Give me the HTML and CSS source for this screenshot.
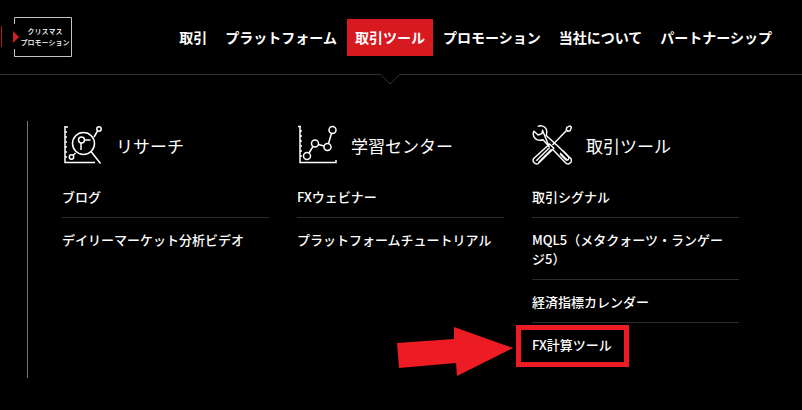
FILE: index.html
```
<!DOCTYPE html>
<html lang="ja">
<head>
  <title>取引ツール</title>
  <meta charset="UTF-8">
  <link rel="stylesheet" href="styles.css">
</head>
<body>
  <header class="header">
    <a href="#" class="promo">
      <svg class="promo-frame" width="72" height="42" viewBox="0 0 72 42" fill="none">
        <path d="M1.500 10v21" stroke="#b3181f"/>
        <path d="M14.500 8V1.500H71.500V40.500H14.500V33" stroke="#c4c4c4"/>
        <path d="M13 15l6 6-6 6z" fill="#d01e25"/>
      </svg>
      <span>クリスマス</span>
      <span>プロモーション</span>
    </a>
    <nav class="nav">
      <a href="#">取引</a>
      <a href="#">プラットフォーム</a>
      <a href="#" class="active">取引ツール
        <svg class="notch" width="20" height="11" viewBox="0 0 20 11">
          <path d="M1 0h18v1l-9 9-9-9z" fill="#000"/>
          <path d="M0.500 0.500l9.500 9.500 9.500-9.500" fill="none" stroke="#303030"/>
        </svg>
      </a>
      <a href="#">プロモーション</a>
      <a href="#">当社について</a>
      <a href="#">パートナーシップ</a>
    </nav>
  </header>

  <main class="menu">
    <div class="columns">
      <section>
        <h2>
          <svg width="40" height="40" viewBox="0 0 40 40" fill="none" stroke="#fff" stroke-width="1.500">
            <path d="M3 1v36.500h30"/>
            <path d="M3 2h3M3 7h2M3 12h2M3 17h2M3 22h2M3 27h2M3 32h2"/>
            <circle cx="21.500" cy="18.500" r="11"/>
            <path d="M29 26.500L38.500 38.500"/>
            <circle cx="19.500" cy="15" r="3"/>
            <path d="M22.500 15h6M19 18v7"/>
            <circle cx="37" cy="4" r="2.200"/>
            <path d="M35.500 6l-3.500 6"/>
            <circle cx="9.500" cy="32" r="2.200"/>
            <path d="M11 30.500l2.500-2.500"/>
          </svg>
          リサーチ
        </h2>
        <ul>
          <li><a href="#">ブログ</a></li>
          <li><a href="#">デイリーマーケット分析ビデオ</a></li>
        </ul>
      </section>
      <section>
        <h2>
          <svg width="40" height="40" viewBox="0 0 40 40" fill="none" stroke="#fff" stroke-width="1.500">
            <path d="M1 1.500h3M3 1v36.500h36v-2.500"/>
            <path d="M3 6h2M3 11h2M3 16h2M3 21h2M3 26h2M3 31h2"/>
            <circle cx="10" cy="31" r="3.500"/>
            <circle cx="18" cy="18.500" r="3.500"/>
            <circle cx="30.500" cy="22" r="3.500"/>
            <circle cx="35.500" cy="5" r="3.500"/>
            <path d="M12 28l4-6.500M21.500 19.500l5.500 1.500M31.500 18.500l3-10"/>
          </svg>
          学習センター
        </h2>
        <ul>
          <li><a href="#">FXウェビナー</a></li>
          <li><a href="#">プラットフォームチュートリアル</a></li>
        </ul>
      </section>
      <section>
        <h2>
          <svg width="40" height="40" viewBox="0 0 42 42" fill="none" stroke="#fff" stroke-width="1.500" stroke-linejoin="round">
            <path d="M6 1.500C9.500 0 13.500 1 15 4.500c1 2.500.500 4.500 0 6.500l8.500 8M18 22.500l-6.500-7C7 17 2 15 1.500 10.500c-.500-1.500 0-3 .500-4l4.500 4 4-1.500.500-3.500z"/>
            <path d="M23.500 19l3 2.500L41 35.500c1.500 3-1.500 6.500-5 5L22 26"/>
            <path d="M29.500 29.500l7.500 7.500M32.500 27l6 6.500c1 2-1 4-3 3l-6-6"/>
            <path d="M37 5L21.500 21"/>
            <path d="M36.500 2.500l3.500-1.500 1.500 1.500-1.500 3.500-2.500.500-1.500-1.500z"/>
            <path d="M18.500 20l4.500 4.500-16.500 16c-3 1.500-6.500-2-5-5z"/>
            <path d="M18.500 23.500L4.500 37.500M20.500 25.500L7 39"/>
          </svg>
          取引ツール
        </h2>
        <ul>
          <li><a href="#">取引シグナル</a></li>
          <li><a href="#">MQL5（メタクォーツ・ランゲージ5）</a></li>
          <li><a href="#">経済指標カレンダー</a></li>
          <li>
            <a href="#" class="marked">FX計算ツール
              <svg class="arrow" width="118" height="50" viewBox="0 0 118 50">
                <path d="M1 17l57-4V1l59 21-56 28-1-13-57 5z" fill="#ed1c24"/>
              </svg>
            </a>
          </li>
        </ul>
      </section>
    </div>
  </main>
</body>
</html>
```

FILE: styles.css
```
body {
  margin: 0;
  background: #000;
  color: #fff;
  font-family: "Noto Sans CJK JP", sans-serif;
  font-size: 13px;
  line-height: 19px;
}
a {
  color: inherit;
  text-decoration: none;
}
.header {
  display: flex;
  justify-content: space-between;
  align-items: center;
  height: 74px;
  padding-right: 22px;
  border-bottom: 1px solid #303030;
}
.promo {
  position: relative;
  display: flex;
  flex-direction: column;
  justify-content: center;
  box-sizing: border-box;
  width: 72px;
  height: 42px;
  padding-left: 18px;
  font-size: 7px;
  font-weight: 500;
  line-height: 11px;
  text-align: center;
  white-space: nowrap;
}
.promo-frame {
  position: absolute;
  top: 0;
  left: 0;
}
.nav {
  display: flex;
  gap: 2px;
  font-size: 14px;
  font-weight: 700;
}
.nav a {
  position: relative;
  padding: 9px 8px;
  white-space: nowrap;
}
.nav .active {
  background: #d71920;
}
.notch {
  position: absolute;
  top: 55px;
  left: 50%;
  margin-left: -10px;
}
.menu {
  padding: 46px 63px 32px 27px;
}
.columns {
  display: grid;
  grid-template-columns: repeat(3, 1fr);
  gap: 28px;
  padding: 0 0 13px 34px;
  border-left: 1px solid #777;
}
h2 {
  display: flex;
  align-items: center;
  gap: 14px;
  height: 48px;
  margin: 0 0 6px;
  font-size: 17px;
  font-weight: 400;
}
ul {
  margin: 0;
  padding: 0;
  list-style: none;
}
li {
  padding: 12px 8px 11px 0;
  border-bottom: 1px solid #2c2c2c;
  font-weight: 500;
}
li:last-child {
  border-bottom: 0;
}
.marked {
  position: relative;
  display: inline-block;
  vertical-align: top;
}
.marked::after {
  content: "";
  position: absolute;
  inset: -10px -17px -13px -16px;
  border: 5px solid #ed1c24;
}
.arrow {
  position: absolute;
  top: -9px;
  right: 100%;
  margin-right: 18px;
}
```
